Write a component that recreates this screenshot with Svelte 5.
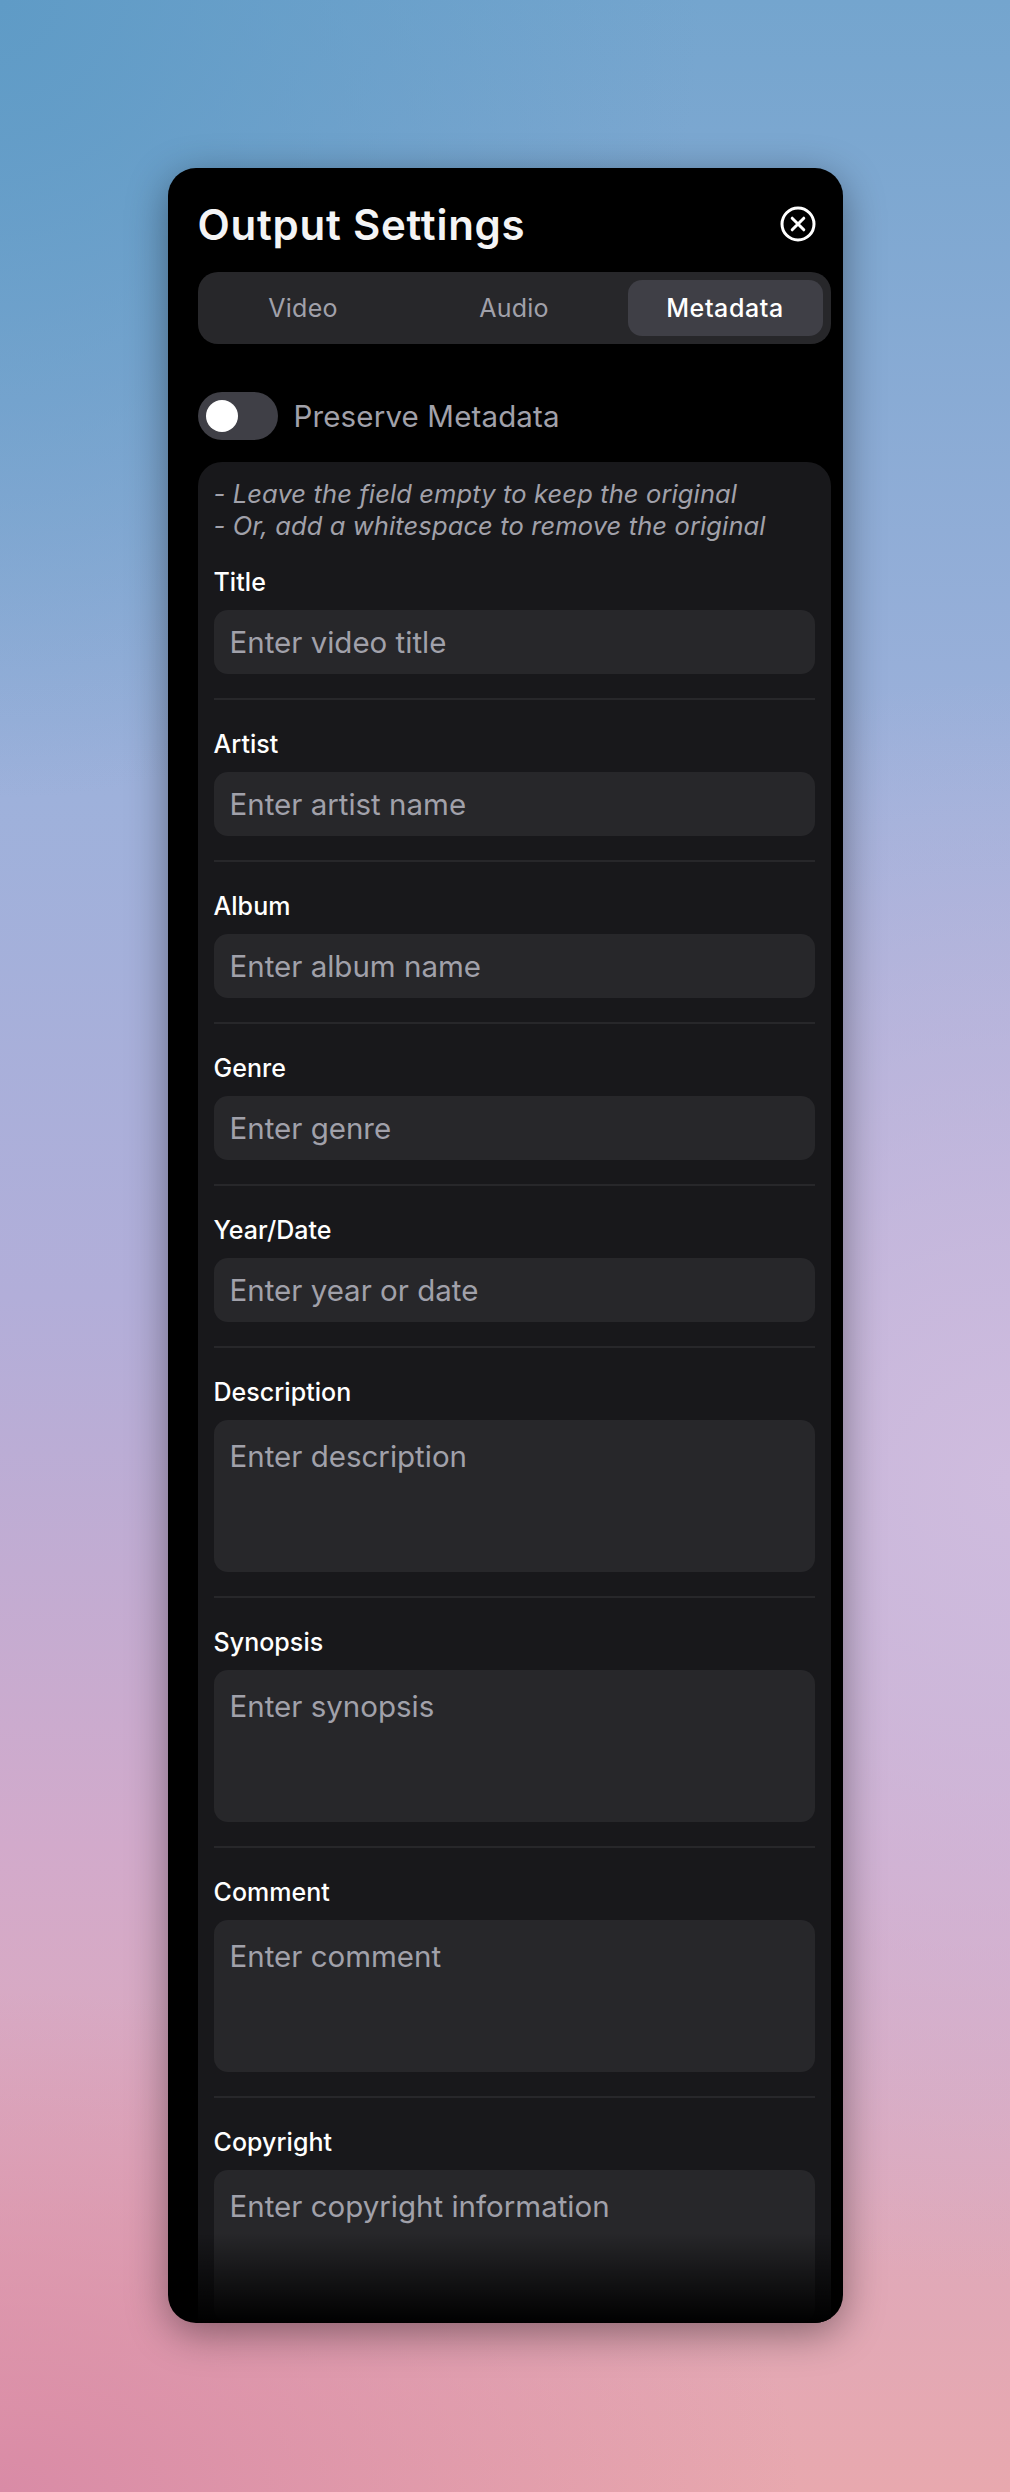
<script lang="ts">
    const tabs = ["Video", "Audio", "Metadata"];
    const fields = [
        { label: "Title", placeholder: "Enter video title" },
        { label: "Artist", placeholder: "Enter artist name" },
        { label: "Album", placeholder: "Enter album name" },
        { label: "Genre", placeholder: "Enter genre" },
        { label: "Year/Date", placeholder: "Enter year or date" },
        { label: "Description", placeholder: "Enter description", multi: true },
        { label: "Synopsis", placeholder: "Enter synopsis", multi: true },
        { label: "Comment", placeholder: "Enter comment", multi: true },
        { label: "Copyright", placeholder: "Enter copyright information", multi: true }
    ];

    let active = $state("Metadata");
    let preserve = $state(false);
</script>

<div class="page">
    <section class="panel">
        <header class="head">
            <h1>Output Settings</h1>
            <button class="close" aria-label="Close">
                <svg viewBox="0 0 36 36" width="36" height="36" fill="none" stroke="#fff" stroke-width="3" stroke-linecap="round">
                    <circle cx="18" cy="18" r="16" />
                    <path d="M12.2 12.2 23.8 23.8M23.8 12.2 12.2 23.8" />
                </svg>
            </button>
        </header>

        <div class="tabs">
            {#each tabs as tab}
                <button class="tab" class:active={active === tab} onclick={() => (active = tab)}>{tab}</button>
            {/each}
        </div>

        <div class="scroller">
            <label class="toggle-row">
                <input type="checkbox" bind:checked={preserve} />
                <span class="track" class:on={preserve}><span class="knob"></span></span>
                <span class="toggle-label">Preserve Metadata</span>
            </label>

            <div class="card">
                <p class="note">- Leave the field empty to keep the original<br />- Or, add a whitespace to remove the original</p>
                {#each fields as field, i}
                    <div class="field" class:last={i === fields.length - 1}>
                        <label for="f{i}">{field.label}</label>
                        {#if field.multi}
                            <textarea id="f{i}" placeholder={field.placeholder}></textarea>
                        {:else}
                            <input id="f{i}" type="text" placeholder={field.placeholder} />
                        {/if}
                    </div>
                {/each}
            </div>
            <div class="fade"></div>
        </div>
    </section>
</div>

<style>
    :global(body) {
        margin: 0;
    }

    .page {
        height: 2492px;
        box-sizing: border-box;
        padding-top: 168px;
        display: flex;
        justify-content: center;
        font-family: Inter, "Open Sans", sans-serif;
        overflow: hidden;
        background:
            radial-gradient(ellipse 700px 800px at 0 0, #5f9bc6 0%, rgba(95, 155, 198, 0) 100%),
            radial-gradient(ellipse 800px 800px at 100% 1480px, #cfbcde 0%, rgba(207, 188, 222, 0) 100%),
            radial-gradient(ellipse 800px 500px at 0 2492px, #d98ba6 0%, rgba(217, 139, 166, 0) 100%),
            linear-gradient(180deg, #74a5ce 0%, #9eb1db 32%, #b2aed9 52%, #d2aacb 74%, #e8a8ae 100%);
    }

    .panel {
        width: 675px;
        height: 2155px;
        box-sizing: border-box;
        padding: 0 12px 0 30px;
        display: flex;
        flex-direction: column;
        background: #000;
        border-radius: 28px;
        box-shadow: 0 10px 40px rgba(0, 0, 0, 0.4);
        overflow: hidden;
    }

    .head {
        height: 104px;
        flex: none;
        display: flex;
        align-items: center;
        justify-content: space-between;
        padding: 8px 15px 0 0;
        box-sizing: border-box;
    }

    h1 {
        margin: 0;
        font-size: 42px;
        font-weight: 600;
        letter-spacing: 0.75px;
        color: #f4f4f5;
    }

    .close {
        width: 36px;
        height: 36px;
        padding: 0;
        background: none;
        border: 0;
        display: flex;
    }

    .tabs {
        flex: none;
        height: 72px;
        box-sizing: border-box;
        padding: 8px;
        display: grid;
        grid-template-columns: repeat(3, 1fr);
        gap: 16px;
        background: #27272a;
        border-radius: 20px;
    }

    .tab {
        font: inherit;
        font-size: 25px;
        letter-spacing: 0.25px;
        color: #a1a1aa;
        background: none;
        border: 0;
        border-radius: 14px;
    }

    .tab.active {
        color: #fff;
        font-weight: 500;
        letter-spacing: 0.6px;
        background: #3f3f46;
    }

    .scroller {
        flex: 1;
        position: relative;
        overflow: hidden;
        padding-top: 48px;
    }

    .toggle-row {
        display: flex;
        align-items: center;
        gap: 16px;
        height: 48px;
    }

    .toggle-row input {
        display: none;
    }

    .track {
        width: 80px;
        height: 48px;
        box-sizing: border-box;
        padding: 8px;
        border-radius: 24px;
        background: #3f3f46;
    }

    .knob {
        display: block;
        width: 32px;
        height: 32px;
        border-radius: 50%;
        background: #fff;
    }

    .track.on .knob {
        margin-left: 32px;
    }

    .toggle-label {
        font-size: 29.5px;
        letter-spacing: 0.15px;
        color: #a1a1aa;
    }

    .card {
        margin-top: 22px;
        padding: 16px;
        background: #18181b;
        border-radius: 24px;
    }

    .note {
        margin: 0 0 20px;
        font-size: 25.5px;
        line-height: 32px;
        font-style: italic;
        letter-spacing: 0.12px;
        color: #a1a1aa;
    }

    .field {
        padding-bottom: 24px;
        margin-bottom: 24px;
        border-bottom: 2px solid #27272a;
    }

    .field.last {
        border-bottom: 0;
    }

    .field label {
        display: block;
        height: 40px;
        margin-bottom: 8px;
        font-size: 25px;
        line-height: 40px;
        font-weight: 500;
        letter-spacing: 0.05px;
        color: #fff;
    }

    .field input,
    .field textarea {
        display: block;
        width: 100%;
        box-sizing: border-box;
        border: 0;
        outline: 0;
        resize: none;
        padding: 12px 16px;
        font: inherit;
        font-size: 29.5px;
        line-height: 40px;
        letter-spacing: 0;
        color: #fff;
        background: #27272a;
        border-radius: 14px;
    }

    .field input {
        height: 64px;
    }

    .field textarea {
        height: 152px;
        padding-top: 16px;
    }

    input::placeholder,
    textarea::placeholder {
        color: #a1a1aa;
        opacity: 1;
    }

    .fade {
        position: absolute;
        left: -30px;
        right: -12px;
        bottom: 0;
        height: 90px;
        background: linear-gradient(180deg, rgba(0, 0, 0, 0), #000);
    }
</style>
